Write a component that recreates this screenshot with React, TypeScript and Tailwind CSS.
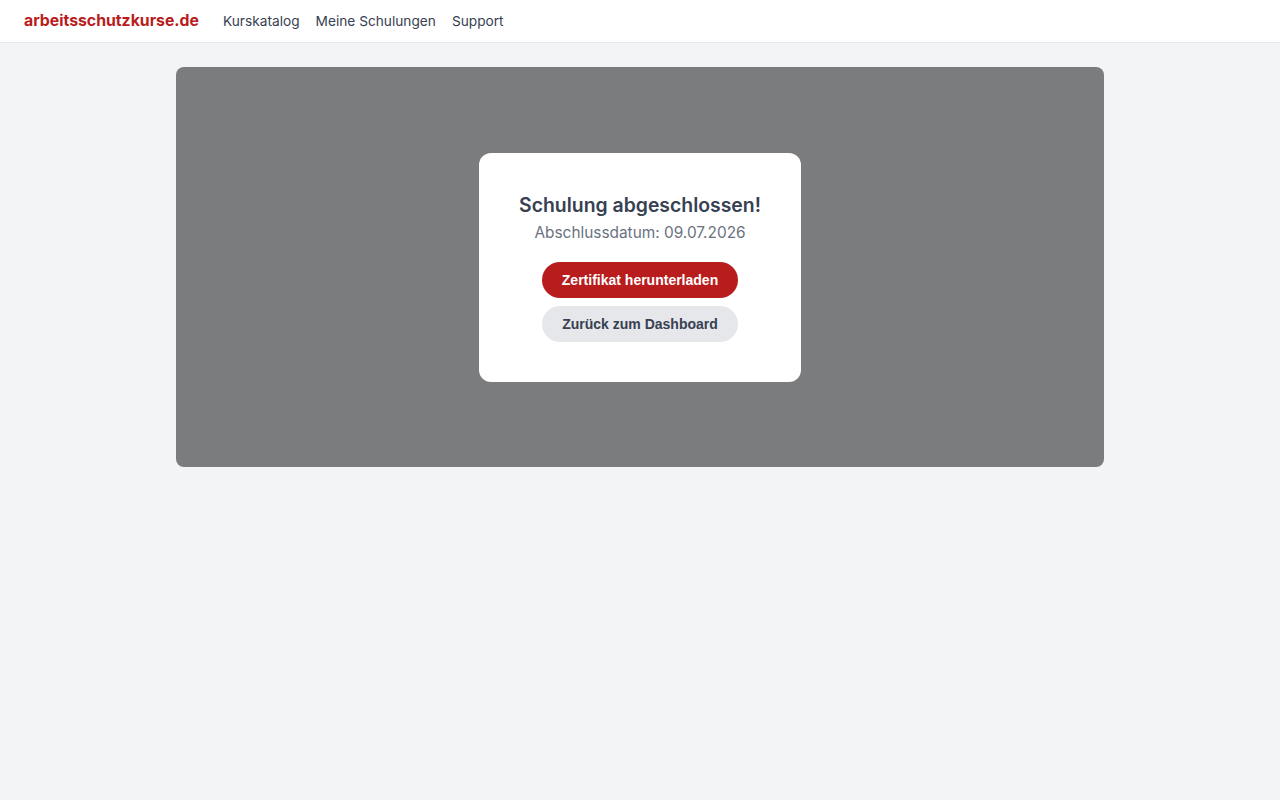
export default function App() {
  return (
    <div className="min-h-screen bg-[#f3f4f6] font-['Inter',sans-serif]">
      <header className="h-[43px] bg-white border-b border-[#e5e7eb] flex items-center px-6 gap-6">
        <span className="text-[15.8px] font-bold text-[#b91c1c]">arbeitsschutzkurse.de</span>
        <nav className="flex items-center gap-4 text-[13.7px] text-[#374151]">
          <a>Kurskatalog</a>
          <a>Meine Schulungen</a>
          <a>Support</a>
        </nav>
      </header>

      <main className="pt-6">
        <div className="mx-auto w-[928px] h-[400px] rounded-lg bg-[#7b7c7e] flex items-center justify-center">
          <div className="bg-white rounded-xl p-10 flex flex-col items-center text-center">
            <h2 className="text-[19.4px] leading-6 font-semibold text-[#374151]">Schulung abgeschlossen!</h2>
            <p className="mt-1 text-[15.4px] leading-6 text-[#6b7280]">Abschlussdatum: 09.07.2026</p>
            <div className="mt-[17px] flex flex-col gap-2 font-['Liberation_Sans',Arial,sans-serif]">
              <button className="w-[196px] h-9 rounded-full bg-[#b91c1c] text-white text-sm font-bold">
                Zertifikat herunterladen
              </button>
              <button className="w-[196px] h-9 rounded-full bg-[#e5e7eb] text-[#374151] text-sm font-bold">
                Zurück zum Dashboard
              </button>
            </div>
          </div>
        </div>
      </main>
    </div>
  );
}
